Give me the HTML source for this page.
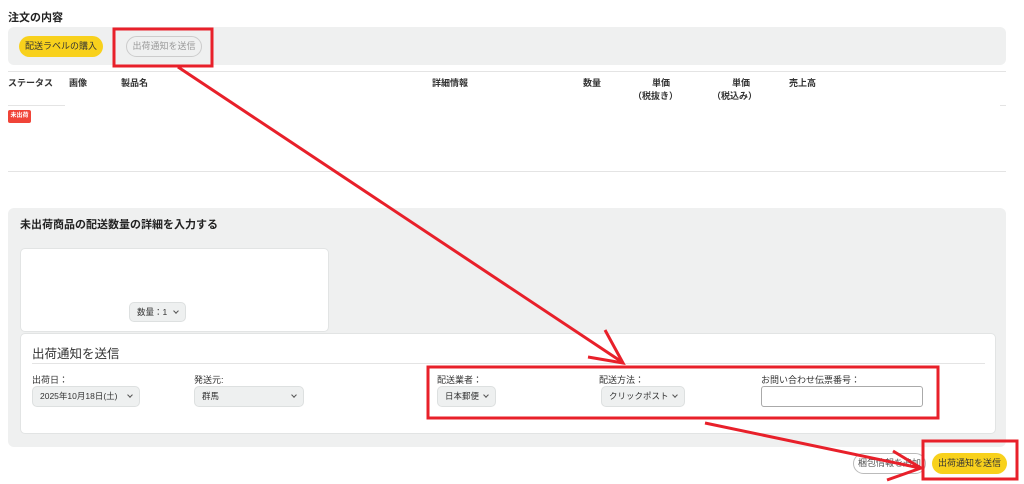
<!DOCTYPE html>
<html><head><meta charset="utf-8"><style>
*{margin:0;padding:0;box-sizing:border-box}
body{width:1024px;height:484px;background:#fff;position:relative;overflow:hidden;font-family:"Liberation Sans","Noto Sans CJK JP",sans-serif;color:#222}
.a{position:absolute;white-space:nowrap}
.b{font-weight:bold}
.sel{position:absolute;background:#eef0f0;border:1px solid #dde0e0;border-radius:5px;font-size:8.5px;line-height:18px;padding-left:7px;color:#333}
.sel:after{content:"";position:absolute;right:7px;top:6px;width:3px;height:3px;border-right:1px solid #555;border-bottom:1px solid #555;transform:rotate(45deg)}
.h{font-size:9px;font-weight:bold;color:#333}
.lbl{font-size:9px;color:#333}
</style></head><body>
<div class="a b" style="left:8px;top:9px;font-size:11px">注文の内容</div>
<div class="a" style="left:8px;top:27px;width:998px;height:38px;background:#eff0f0;border-radius:6px"></div>
<div class="a" style="left:19px;top:36px;width:84px;height:21px;background:#f8d11c;border-radius:11px;font-size:9px;line-height:21px;text-align:center;color:#333">配送ラベルの購入</div>
<div class="a" style="left:126px;top:36px;width:76px;height:21px;border:1px solid #ccc;border-radius:11px;font-size:9px;line-height:19px;text-align:center;color:#999">出荷通知を送信</div>
<div class="a" style="left:8px;top:71px;width:998px;height:1px;background:#e4e4e4"></div>
<div class="a h" style="left:8px;top:76px">ステータス</div>
<div class="a h" style="left:69px;top:76px">画像</div>
<div class="a h" style="left:121px;top:76px">製品名</div>
<div class="a h" style="left:432px;top:76px">詳細情報</div>
<div class="a h" style="left:583px;top:76px">数量</div>
<div class="a h" style="left:640px;top:76px;text-align:right;width:30px">単価</div>
<div class="a h" style="left:633px;top:89px">（税抜き）</div>
<div class="a h" style="left:720px;top:76px;text-align:right;width:30px">単価</div>
<div class="a h" style="left:712px;top:89px">（税込み）</div>
<div class="a h" style="left:789px;top:76px">売上高</div>
<div class="a" style="left:8px;top:105px;width:57px;height:1px;background:#e4e4e4"></div>
<div class="a" style="left:1000px;top:105px;width:6px;height:1px;background:#e4e4e4"></div>
<div class="a" style="left:8px;top:110px;width:23px;height:13px;background:#f04438;border-radius:2px;color:#fff;font-size:6px;line-height:13px;text-align:center;font-weight:bold">未出荷</div>
<div class="a" style="left:8px;top:171px;width:998px;height:1px;background:#e4e4e4"></div>
<div class="a" style="left:8px;top:208px;width:998px;height:239px;background:#eff0f0;border-radius:6px"></div>
<div class="a b" style="left:20px;top:216px;font-size:11px">未出荷商品の配送数量の詳細を入力する</div>
<div class="a" style="left:20px;top:248px;width:309px;height:84px;background:#fff;border:1px solid #e2e4e4;border-radius:5px"></div>
<div class="sel" style="left:129px;top:302px;width:57px;height:20px">数量：1</div>
<div class="a" style="left:20px;top:333px;width:976px;height:101px;background:#fff;border:1px solid #e2e4e4;border-radius:5px"></div>
<div class="a" style="left:32px;top:343px;font-size:12.5px;color:#333">出荷通知を送信</div>
<div class="a" style="left:32px;top:363px;width:953px;height:1px;background:#e4e4e4"></div>
<div class="a lbl" style="left:32px;top:373px">出荷日：</div>
<div class="a lbl" style="left:194px;top:373px">発送元:</div>
<div class="a lbl" style="left:437px;top:373px">配送業者：</div>
<div class="a lbl" style="left:599px;top:373px">配送方法：</div>
<div class="a lbl" style="left:761px;top:373px">お問い合わせ伝票番号：</div>
<div class="sel" style="left:32px;top:386px;width:108px;height:21px;line-height:19px">2025年10月18日(土)</div>
<div class="sel" style="left:194px;top:386px;width:110px;height:21px;line-height:19px">群馬</div>
<div class="sel" style="left:437px;top:386px;width:59px;height:21px;line-height:19px">日本郵便</div>
<div class="sel" style="left:601px;top:386px;width:84px;height:21px;line-height:19px">クリックポスト</div>
<div class="a" style="left:761px;top:386px;width:162px;height:21px;border:1px solid #aaa;border-radius:3px;background:#fff"></div>
<div class="a" style="left:853px;top:453px;width:73px;height:21px;border:1px solid #bbb;border-radius:11px;font-size:9px;line-height:19px;text-align:center;color:#555">梱包情報を追加</div>
<div class="a" style="left:932px;top:453px;width:75px;height:21px;background:#f8d11c;border-radius:11px;font-size:9px;line-height:21px;text-align:center;color:#333">出荷通知を送信</div>
<svg class="a" style="left:0;top:0" width="1024" height="484">
<g fill="none" stroke="#e8202a" stroke-width="3">
<rect x="114" y="29" width="98" height="37"/>
<rect x="428" y="367" width="510" height="51"/>
<rect x="923" y="441" width="94" height="38"/>
<line x1="178" y1="67" x2="622" y2="362"/>
<polyline points="588,357 623,363 605,330"/>
<line x1="705" y1="423" x2="920" y2="468"/>
<polyline points="893,451 921,468 887,480"/>
</g>
</svg>
</body></html>
